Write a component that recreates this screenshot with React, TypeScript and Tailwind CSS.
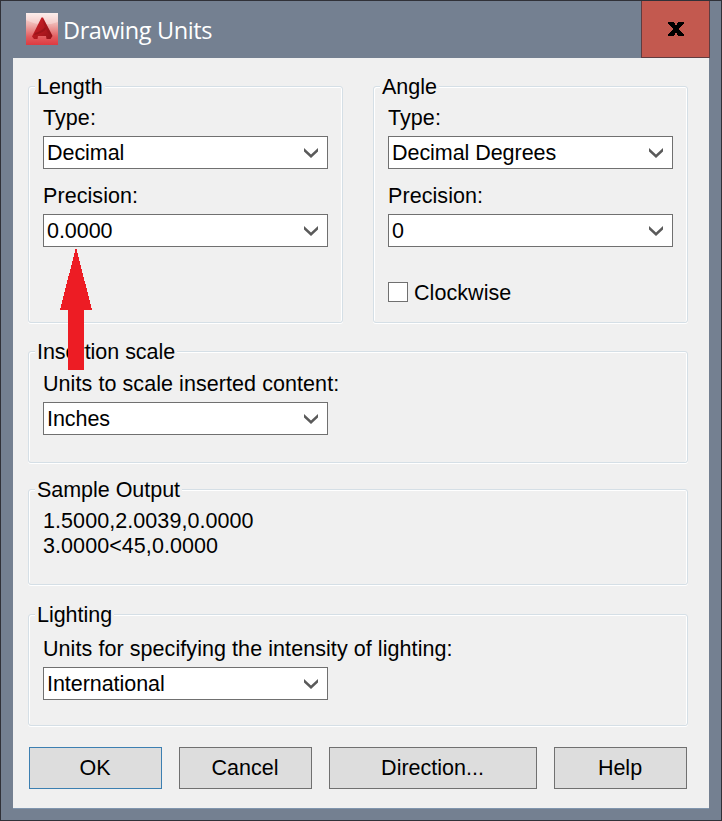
import type { ReactNode } from "react";

function Chevron() {
  return (
    <svg width="16" height="10" viewBox="0 0 16 10" className="shrink-0">
      <path d="M1 0L8 6.4L15 0V3.6L8 10L1 3.6Z" fill="#5a5a5a" />
    </svg>
  );
}

function Select({ value }: { value: string }) {
  return (
    <div className="flex h-[33px] w-[285px] shrink-0 items-center justify-between border border-[#707070] bg-white pl-[3px] pr-2">
      <span className="whitespace-pre leading-6 tracking-[-0.05px]">{value}</span>
      <Chevron />
    </div>
  );
}

function Label({ children, className = "" }: { children: ReactNode; className?: string }) {
  return <div className={`h-6 shrink-0 whitespace-nowrap leading-6 ${className}`}>{children}</div>;
}

function Group({ title, className, children }: { title: string; className: string; children: ReactNode }) {
  return (
    <section
      className={`flex shrink-0 flex-col rounded-[3px] border border-[#d5dfe6] pl-[14px] shadow-[inset_1px_1px_0_#fff,inset_-1px_0_0_#fff,0_1px_0_#fff] ${className}`}
    >
      <h2 className="-ml-2 -mt-3 h-6 shrink-0 self-start bg-[#f0f0f0] px-[2px] leading-6 tracking-[-0.03px]">{title}</h2>
      {children}
    </section>
  );
}

function Button({ children, className = "w-[133px] border-[#707070]" }: { children: ReactNode; className?: string }) {
  return (
    <button className={`flex h-[42px] items-center justify-center border bg-[#dddddd] pr-px leading-6 tracking-[0px] ${className}`}>
      {children}
    </button>
  );
}

function Logo() {
  return (
    <svg width="32" height="32" viewBox="0 0 32 32" className="shrink-0">
      <defs>
        <linearGradient id="tile" x1="0" y1="0" x2="0" y2="1">
          <stop offset="0" stopColor="#fbe6e3" />
          <stop offset="0.35" stopColor="#efb3b0" />
          <stop offset="0.75" stopColor="#e25b5e" />
          <stop offset="1" stopColor="#dd3a40" />
        </linearGradient>
        <linearGradient id="mark" x1="0" y1="0" x2="1" y2="1">
          <stop offset="0" stopColor="#cf2028" />
          <stop offset="0.6" stopColor="#b0181e" />
          <stop offset="1" stopColor="#8f1217" />
        </linearGradient>
      </defs>
      <rect width="32" height="32" fill="url(#tile)" />
      <path d="M0 0H32V9Q16 15 0 7Z" fill="#fff" opacity="0.3" />
      <path d="M15.5 4.5H17L26.5 23L24.5 26H20.5L20 23H12L11.5 26H8L6 23.5Z" fill="url(#mark)" />
      <path d="M16.5 5L18 12L22 20L26.5 23L24 18Z" fill="#8d1116" opacity="0.4" />
      <path d="M9 20Q16 18 19 14L20 16Q17 20 8 22Z" fill="#8d1116" opacity="0.6" />
    </svg>
  );
}

export default function App() {
  return (
    <div className="relative flex h-[821px] w-[722px] flex-col overflow-hidden border border-[#303138] bg-[#748091] font-['Liberation_Sans',Arial,sans-serif] text-[21.5px] tracking-[0.07px] text-black">
      <header className="flex h-[57px] shrink-0 justify-between pl-[25px] pr-[11px]">
        <div className="flex pt-3">
          <Logo />
          <h1 className="ml-[5px] whitespace-nowrap font-['Open_Sans',sans-serif] text-[23.5px] leading-[35px] tracking-[-0.4px] text-white">
            Drawing Units
          </h1>
        </div>
        <button className="-mt-px flex h-[58px] w-[69px] items-start justify-center border border-[#603c40] bg-[#c3594f] pt-[21px]" aria-label="Close">
          <svg width="16" height="14" viewBox="0 0 16 14" shapeRendering="crispEdges">
            <path d="M0 0H5.5L8 3.5L10.5 0H16V1L11 7L16 13V14H10.5L8 10.5L5.5 14H0V13L5 7L0 1Z" fill="#000" />
          </svg>
        </button>
      </header>

      <main className="ml-3 flex h-[750px] w-[696px] shrink-0 flex-col bg-[#f0f0f0] pl-[15px] pt-7 shadow-[0_1px_0_#8095ad]">
        <div className="flex gap-[30px]">
          <Group title="Length" className="h-[237px] w-[315px]">
            <Label className="mt-[7px]">Type:</Label>
            <div className="mt-[6px]"><Select value="Decimal" /></div>
            <Label className="mt-[15px]">Precision:</Label>
            <div className="mt-[6px]"><Select value="0.0000" /></div>
          </Group>
          <Group title="Angle" className="h-[237px] w-[315px]">
            <Label className="mt-[7px]">Type:</Label>
            <div className="mt-[6px]"><Select value="Decimal Degrees" /></div>
            <Label className="mt-[15px]">Precision:</Label>
            <div className="mt-[6px]"><Select value="0" /></div>
            <label className="mt-[34px] flex h-6 items-center">
              <span className="-mt-[2px] h-5 w-5 border border-[#707070] bg-white" />
              <span className="ml-[6px] leading-6">Clockwise</span>
            </label>
          </Group>
        </div>

        <Group title="Insertion scale" className="mt-7 h-[112px] w-[660px]">
          <Label className="mt-[8px]">Units to scale inserted content:</Label>
          <div className="mt-[6px]"><Select value="Inches" /></div>
        </Group>

        <Group title="Sample Output" className="mt-[26px] h-[96px] w-[660px]">
          <div className="mt-[7px] leading-[25px]">
            <div>1.5000,2.0039,0.0000</div>
            <div>3.0000&lt;45,0.0000</div>
          </div>
        </Group>

        <Group title="Lighting" className="mt-[29px] h-[112px] w-[660px]">
          <Label className="mt-[10px]">Units for specifying the intensity of lighting:</Label>
          <div className="mt-[6px]"><Select value="International" /></div>
        </Group>

        <footer className="ml-px mt-[21px] flex gap-[17px]">
          <Button className="w-[133px] border-[#3c7fb1]">OK</Button>
          <Button>Cancel</Button>
          <Button className="w-[208px] border-[#707070]">Direction...</Button>
          <Button>Help</Button>
        </footer>
      </main>

      <svg className="pointer-events-none absolute left-[59px] top-[248px]" width="32" height="121" viewBox="0 0 32 121" shapeRendering="crispEdges">
        <path d="M15.5 0H16.5L32 61H24V121H8V61H0Z" fill="#ed1c24" />
      </svg>
    </div>
  );
}
